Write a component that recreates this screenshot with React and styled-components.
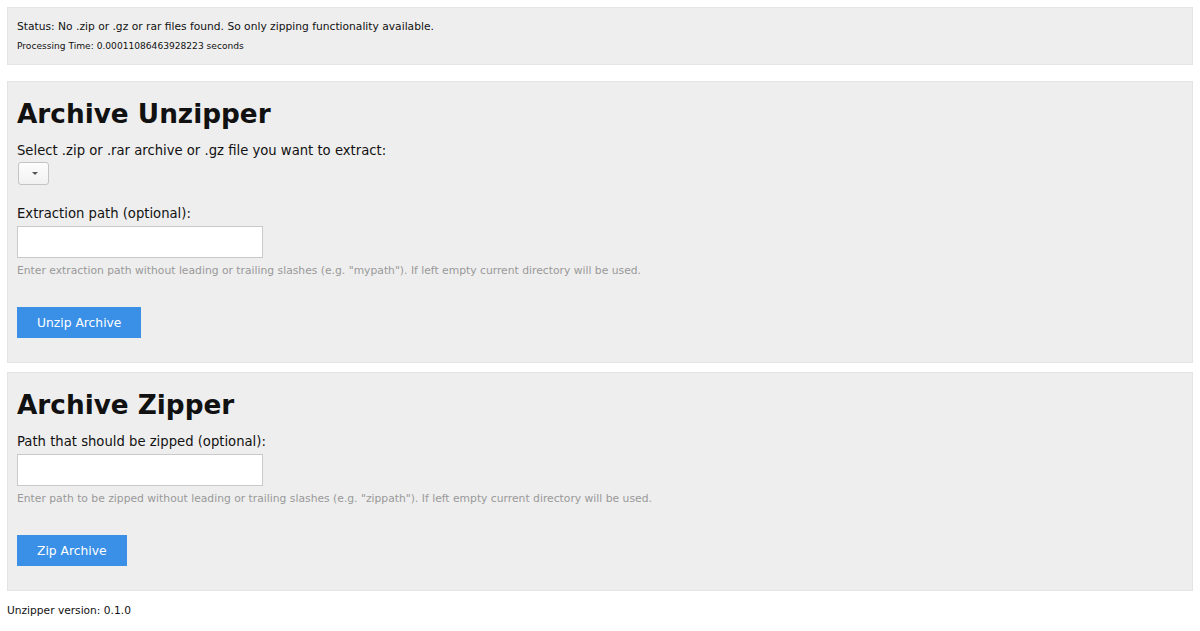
import styled, { createGlobalStyle } from "styled-components";

const Global = createGlobalStyle`
  html, body {
    margin: 0;
    padding: 0;
    background: #ffffff;
  }
  body {
    font-family: "DejaVu Sans", sans-serif;
    color: #111;
  }
`;

export default function App() {
  return (
    <>
      <Global />
      <Page>
        <StatusPanel>
          <StatusLine>
            Status: No .zip or .gz or rar files found. So only zipping functionality available.
          </StatusLine>
          <TimeLine>Processing Time: 0.00011086463928223 seconds</TimeLine>
        </StatusPanel>

        <Section $top={16}>
          <Heading>Archive Unzipper</Heading>
          <Label>Select .zip or .rar archive or .gz file you want to extract:</Label>
          <Select aria-label="archive">
            <Caret />
          </Select>
          <Label $gap={19}>Extraction path (optional):</Label>
          <TextInput />
          <Hint>
            Enter extraction path without leading or trailing slashes (e.g. "mypath"). If left empty
            current directory will be used.
          </Hint>
          <Button>Unzip Archive</Button>
        </Section>

        <Section $top={9}>
          <Heading>Archive Zipper</Heading>
          <Label>Path that should be zipped (optional):</Label>
          <TextInput />
          <Hint>
            Enter path to be zipped without leading or trailing slashes (e.g. "zippath"). If left
            empty current directory will be used.
          </Hint>
          <Button>Zip Archive</Button>
        </Section>

        <Footer>Unzipper version: 0.1.0</Footer>
      </Page>
    </>
  );
}

// ─── Styled components ───

const Page = styled.div`
  padding: 7px;
`;

const Panel = styled.div`
  background: #eeeeee;
  border: 1px solid #e4e4e4;
  box-sizing: border-box;
`;

const StatusPanel = styled(Panel)`
  height: 58px;
  padding: 11px 9px 0;
`;

const StatusLine = styled.div`
  font-size: 10.7px;
  line-height: 16px;
`;

const TimeLine = styled.div`
  margin-top: 5px;
  font-size: 9.1px;
  line-height: 12px;
`;

const Section = styled(Panel)`
  margin-top: ${({ $top }) => $top}px;
  padding: 14px 9px 24px;
  display: flex;
  flex-direction: column;
  align-items: flex-start;
`;

const Heading = styled.h2`
  margin: 0;
  font-size: 26.3px;
  font-weight: bold;
  line-height: 36px;
`;

const Label = styled.label`
  margin-top: ${({ $gap }) => $gap ?? 9}px;
  font-size: 13.2px;
  line-height: 20px;
`;

const Select = styled.div`
  margin-top: 1px;
  margin-left: 1px;
  width: 31px;
  height: 23px;
  box-sizing: border-box;
  border: 1px solid #c4c4c4;
  border-radius: 3px;
  background: linear-gradient(#fdfdfd, #f1f1f1);
  display: flex;
  align-items: center;
  justify-content: center;
`;

const Caret = styled.span`
  margin-left: 2px;
  width: 0;
  height: 0;
  border-left: 3px solid transparent;
  border-right: 3px solid transparent;
  border-top: 3px solid #555;
`;

const TextInput = styled.input`
  margin-top: 2px;
  width: 246px;
  height: 32px;
  box-sizing: border-box;
  border: 1px solid #c9c9c9;
  background: #fff;
  padding: 0 6px;
`;

const Hint = styled.div`
  margin-top: 6px;
  font-size: 10.75px;
  line-height: 14px;
  color: #999999;
`;

const Button = styled.button`
  margin-top: 29px;
  height: 31px;
  padding: 0 20px;
  border: none;
  background: #3a8fe7;
  color: #fff;
  font-family: "DejaVu Sans", sans-serif;
  font-size: 12.3px;
`;

const Footer = styled.div`
  margin-top: 12px;
  font-size: 10.65px;
  line-height: 16px;
`;
